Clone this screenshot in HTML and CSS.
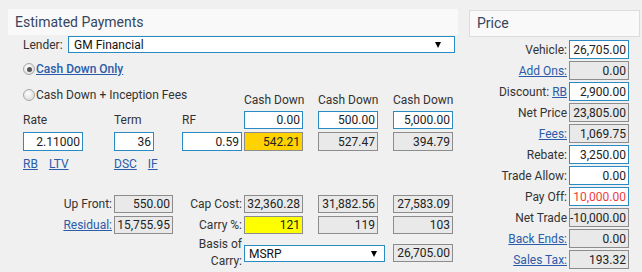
FILE: index.html
```html
<!DOCTYPE html>
<html lang="en">
<head>
    <meta charset="UTF-8">
    <title>Estimated Payments</title>
    <link rel="stylesheet" href="styles.css">
</head>
<body>
    <div class="page">
        <!-- Estimated payments panel -->
        <section class="payments">
            <div class="panel-head">Estimated Payments</div>

            <div class="lender-row">
                <span class="lbl">Lender:</span>
                <div class="select lender-select"><span>GM Financial</span><i class="caret"></i></div>
            </div>

            <div class="radio-row first">
                <span class="radio on"></span><a href="#" class="strong">Cash Down Only</a>
            </div>

            <div class="terms">
                <div class="radio-row second"><span class="radio"></span>Cash Down + Inception Fees</div>
                <div class="cd-head c-cd1">Cash Down</div>
                <div class="cd-head c-cd2">Cash Down</div>
                <div class="cd-head c-cd3">Cash Down</div>

                <div class="lbl c-rate">Rate</div>
                <div class="lbl c-term">Term</div>
                <div class="lbl c-rf">RF</div>
                <div class="box input c-cd1">0.00</div>
                <div class="box input c-cd2">500.00</div>
                <div class="box input c-cd3">5,000.00</div>

                <div class="box input c-rate">2.11000</div>
                <div class="box input c-term">36</div>
                <div class="box input c-rf">0.59</div>
                <div class="box gold c-cd1">542.21</div>
                <div class="box c-cd2">527.47</div>
                <div class="box c-cd3">394.79</div>

                <div class="links c-rate"><a href="#">RB</a><a href="#">LTV</a></div>
                <div class="links c-term"><a href="#">DSC</a><a href="#">IF</a></div>
            </div>

            <div class="totals">
                <div class="lbl right">Up Front:</div>
                <div class="box">550.00</div>
                <div class="lbl right">Cap Cost:</div>
                <div class="box">32,360.28</div>
                <div class="box t-cd2">31,882.56</div>
                <div class="box t-cd3">27,583.09</div>

                <div class="lbl right"><a href="#">Residual:</a></div>
                <div class="box">15,755.95</div>
                <div class="lbl right">Carry %:</div>
                <div class="box yellow">121</div>
                <div class="box t-cd2">119</div>
                <div class="box t-cd3">103</div>

                <div class="lbl right basis">Basis of<br>Carry:</div>
                <div class="select basis-select"><span>MSRP</span><i class="caret"></i></div>
                <div class="box t-cd3 basis-value">26,705.00</div>
            </div>
        </section>

        <!-- Price panel -->
        <section class="price">
            <div class="panel-head boxed">Price</div>
            <div class="price-rows">
                <div class="lbl right">Vehicle:</div><div class="box input">26,705.00</div>
                <div class="lbl right"><a href="#">Add Ons:</a></div><div class="box">0.00</div>
                <div class="lbl right">Discount:&nbsp;<a href="#">RB</a></div><div class="box input">2,900.00</div>
                <div class="lbl right">Net Price</div><div class="box">23,805.00</div>
                <div class="lbl right"><a href="#">Fees:</a></div><div class="box">1,069.75</div>
                <div class="lbl right">Rebate:</div><div class="box input">3,250.00</div>
                <div class="lbl right">Trade Allow:</div><div class="box input">0.00</div>
                <div class="lbl right">Pay Off:</div><div class="box input red">10,000.00</div>
                <div class="lbl right">Net Trade</div><div class="box">-10,000.00</div>
                <div class="lbl right"><a href="#">Back Ends:</a></div><div class="box">0.00</div>
                <div class="lbl right"><a href="#">Sales Tax:</a></div><div class="box">193.32</div>
            </div>
        </section>
    </div>
</body>
</html>
```

FILE: styles.css
```css
/* General styles */
body {
    margin: 0;
    background: #f0f0f0;
    font-family: Roboto, "Liberation Sans", Arial, sans-serif;
    font-size: 12px;
    color: #333;
}

a {
    color: #2a5caa;
    text-decoration: underline;
}

.page {
    display: flex;
    gap: 11px;
    padding: 9px 0 0 8px;
}

.panel-head {
    height: 26px;
    line-height: 26px;
    padding-left: 7px;
    background: #f9f9f9;
    font-size: 14px;
    color: #36465d;
}

.panel-head.boxed {
    box-sizing: border-box;
    height: 27px;
    line-height: 25px;
    border: 1px solid #dcdcdc;
}

.lbl {
    white-space: nowrap;
    display: flex;
    align-items: center;
}

.lbl.right {
    justify-content: flex-end;
    padding-right: 2px;
}

/* Value boxes */
.box {
    box-sizing: border-box;
    display: flex;
    align-items: center;
    justify-content: flex-end;
    padding-right: 2px;
    border: 1px solid #8c8c8c;
    background: #e9e9e9;
    color: #222;
}

.box.input {
    border-color: #2a8bc4;
    background: #fff;
}

.box.gold {
    background: #ffd200;
}

.box.yellow {
    background: #ffff00;
}

.box.red {
    color: #f03c3c;
}

/* Fake select */
.select {
    box-sizing: border-box;
    display: flex;
    align-items: center;
    justify-content: space-between;
    height: 17px;
    border: 1px solid #2a8bc4;
    background: #fff;
    color: #111;
}

.caret {
    width: 0;
    height: 0;
    border-left: 3px solid transparent;
    border-right: 3px solid transparent;
    border-top: 6px solid #000;
}

/* Estimated payments */
.payments {
    width: 450px;
}

.lender-row {
    display: flex;
    align-items: center;
    height: 17px;
    margin: 1px 0 0 15px;
}

.lender-row .lbl {
    width: 45px;
}

.lender-select {
    width: 387px;
    padding: 0 13px 0 5px;
}

.radio-row {
    display: flex;
    align-items: center;
    height: 26px;
}

.radio-row.first {
    margin: 3px 0 0 15px;
}

.radio-row.second {
    grid-column: 2 / 8;
    grid-row: 1;
}

.strong {
    font-weight: 500;
}

.radio {
    box-sizing: border-box;
    width: 12px;
    height: 12px;
    margin-right: 1px;
    border: 1px solid #a8a8a8;
    border-radius: 50%;
    background: radial-gradient(circle at 40% 35%, #fdfdfd, #d4d4d4);
    display: flex;
    align-items: center;
    justify-content: center;
}

.radio.on::after {
    content: "";
    width: 5px;
    height: 5px;
    border-radius: 50%;
    background: #555;
}

.terms {
    display: grid;
    grid-template-columns: 15px 60px 31px 40px 28px 60px 2px 59px 15px 60px 15px 60px;
    grid-template-rows: 26px 18px 19px 20px;
    row-gap: 3px;
}

.c-rate { grid-column: 2; }
.c-term { grid-column: 4; }
.c-rf { grid-column: 6; }
.c-cd1 { grid-column: 8; }
.c-cd2 { grid-column: 10; }
.c-cd3 { grid-column: 12; }

.cd-head {
    grid-row: 1;
    align-self: end;
    line-height: 16px;
    text-align: center;
    white-space: nowrap;
}

.links {
    display: flex;
    gap: 11px;
    line-height: 20px;
}

.totals {
    display: grid;
    grid-template-columns: 106px 59px 71px 59px 15px 60px 15px 60px;
    grid-template-rows: 18px 18px 25px;
    row-gap: 3px;
    margin-top: 21px;
}

.t-cd2 { grid-column: 6; }
.t-cd3 { grid-column: 8; }

.basis {
    display: block;
    grid-column: 3;
    grid-row: 3;
    align-self: center;
    line-height: 17px;
    text-align: right;
    margin-top: 6px;
}

.basis-select {
    grid-column: 4 / 7;
    grid-row: 3;
    align-self: end;
    width: 141px;
    padding: 0 7px 0 4px;
}

.basis-value {
    grid-row: 3;
    align-self: end;
    height: 18px;
}

/* Price */
.price {
    width: 171px;
    margin-top: 1px;
}

.price-rows {
    display: grid;
    grid-template-columns: 100px 60px;
    grid-auto-rows: 19px;
    row-gap: 2px;
    margin-top: 3px;
}
```
